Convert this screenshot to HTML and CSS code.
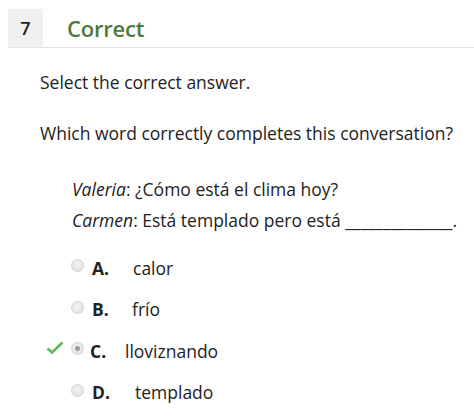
FILE: index.html
```html
<!DOCTYPE html>
<html>
<head>
<meta charset="utf-8">
<link rel="stylesheet" href="styles.css">
</head>
<body>
<div class="header">
  <div class="num">7</div>
  <div class="status">Correct</div>
</div>
<div class="content">
  <p class="prompt">Select the correct answer.</p>
  <p class="question">Which word correctly completes this conversation?</p>
  <div class="dialog">
    <div><em>Valeria</em>: ¿Cómo está el clima hoy?</div>
    <div><em>Carmen</em>: Está templado pero está ______________.</div>
  </div>
  <ul class="options">
    <li class="opt"><span class="mark"></span><span class="radio"></span><span class="letter">A.</span><span class="ans a">calor</span></li>
    <li class="opt"><span class="mark"></span><span class="radio"></span><span class="letter">B.</span><span class="ans b">frío</span></li>
    <li class="opt"><span class="mark"><svg width="18" height="14" viewBox="0 0 18 14"><path d="M1.5 7.5 L6 11.5 L16.5 1.5" fill="none" stroke="#5cb85c" stroke-width="2.6"/></svg></span><span class="radio checked"></span><span class="letter c">C.</span><span class="ans c">lloviznando</span></li>
    <li class="opt"><span class="mark"></span><span class="radio"></span><span class="letter">D.</span><span class="ans d">templado</span></li>
  </ul>
</div>
</body>
</html>
```
FILE: styles.css
```css
body {
  margin: 0;
  font-family: "Open Sans", "DejaVu Sans", sans-serif;
  color: #222;
  background: #fff;
}
.header {
  display: flex;
  align-items: center;
  margin: 9px 0 0 8px;
  height: 38px;
  border-bottom: 1px solid #e2e2e2;
}
.num {
  width: 35px;
  height: 38px;
  background: #f0f0f0;
  display: flex;
  align-items: center;
  justify-content: center;
  font-size: 18px;
  font-weight: 600;
  color: #222;
}
.status {
  margin-left: 24px;
  font-size: 22px;
  font-weight: 600;
  color: #4b7a3c;
  letter-spacing: -0.2px;
}
.content {
  padding-left: 40px;
  font-size: 17.5px;
}
.prompt {
  margin: 22px 0 0;
  line-height: 24px;
}
.question {
  margin: 27px 0 0;
  line-height: 24px;
}
.dialog {
  margin: 29px 0 0 32px;
  line-height: 31px;
}
.options {
  list-style: none;
  margin: 11px 0 0;
  padding: 0;
}
.opt {
  display: flex;
  align-items: center;
  height: 41.5px;
}
.mark {
  width: 25px;
  margin-left: 6px;
  display: flex;
  align-items: center;
  position: relative;
  top: -3px;
}
.radio {
  width: 13px;
  height: 13px;
  border-radius: 50%;
  background: radial-gradient(circle at 50% 40%, #f4f4f4, #dcdcdc);
  border: 1px solid #d4d4d4;
  box-sizing: border-box;
  position: relative;
  top: -2px;
}
.radio.checked::after {
  content: "";
  position: absolute;
  left: 3px;
  top: 3px;
  width: 5px;
  height: 5px;
  border-radius: 50%;
  background: #9a9a9a;
}
.letter {
  font-weight: 700;
  margin-left: 8px;
  width: 40px;
}
.letter.c {
  margin-left: 6px;
  width: 38px;
}
.ans.a { margin-left: 1px; }
.ans.b { margin-left: 0; }
.ans.c { margin-left: -3px; }
.ans.d { margin-left: 3px; }
```
